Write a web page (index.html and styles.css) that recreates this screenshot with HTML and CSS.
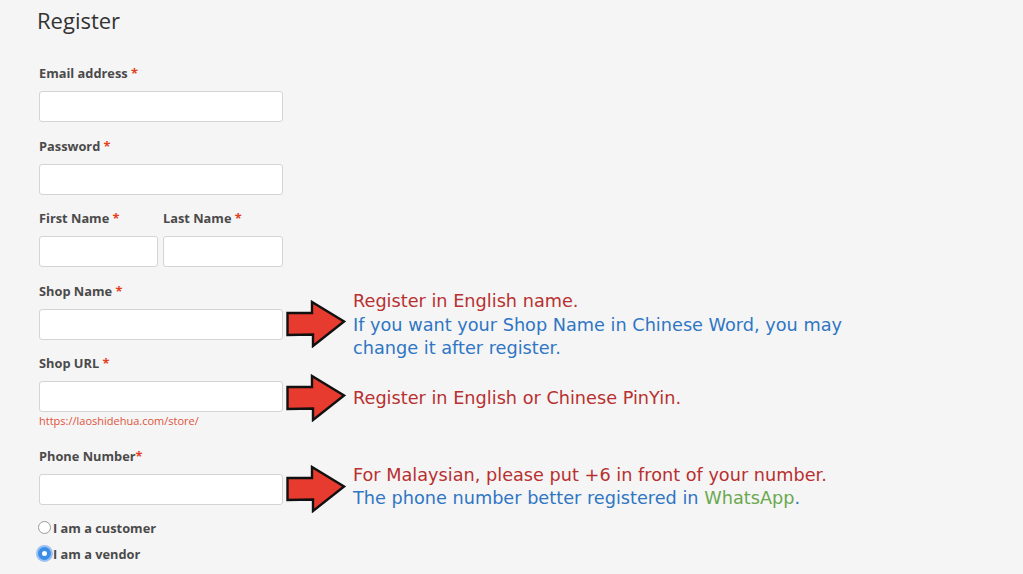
FILE: index.html
```html
<!DOCTYPE html>
<html lang="en">
<head>
<meta charset="utf-8">
<title>Register</title>
<link rel="stylesheet" href="styles.css">
</head>
<body>
<div class="page">
  <h2 class="title">Register</h2>
  <form class="form">
    <div class="field">
      <label class="label">Email address <span class="req">*</span></label>
      <div class="row"><input class="input" type="email"></div>
    </div>
    <div class="field">
      <label class="label">Password <span class="req">*</span></label>
      <div class="row"><input class="input" type="password"></div>
    </div>
    <div class="field">
      <div class="split">
        <div class="half">
          <label class="label">First Name <span class="req">*</span></label>
          <input class="input input-first" type="text">
        </div>
        <div class="half">
          <label class="label">Last Name <span class="req">*</span></label>
          <input class="input input-last" type="text">
        </div>
      </div>
    </div>
    <div class="field">
      <label class="label">Shop Name <span class="req">*</span></label>
      <div class="row">
        <input class="input" type="text">
        <svg class="arrow" viewBox="0 0 60 48" width="60" height="48"><polygon points="1.5,13 26,13 26,2 58,21.5 27,46 27,34.5 1.5,35" fill="#e63b2e" stroke="#111" stroke-width="2.4" stroke-linejoin="miter"/></svg>
        <p class="note note-mid"><span class="red">Register in English name.</span><br><span class="blue">If you want your Shop Name in Chinese Word, you may</span><br><span class="blue">change it after register.</span></p>
      </div>
    </div>
    <div class="field">
      <label class="label">Shop URL <span class="req">*</span></label>
      <div class="row">
        <input class="input" type="text">
        <svg class="arrow arrow-url" viewBox="0 0 60 48" width="60" height="48"><polygon points="1.5,13 26,13 26,2 58,21.5 27,46 27,34.5 1.5,35" fill="#e63b2e" stroke="#111" stroke-width="2.4" stroke-linejoin="miter"/></svg>
        <p class="note note-one"><span class="red">Register in English or Chinese PinYin.</span></p>
      </div>
      <div class="hint">https://laoshidehua.com/store/</div>
    </div>
    <div class="field field-phone">
      <label class="label">Phone Number<span class="req">*</span></label>
      <div class="row">
        <input class="input" type="tel">
        <svg class="arrow" viewBox="0 0 60 48" width="60" height="48"><polygon points="1.5,13 26,13 26,2 58,21.5 27,46 27,34.5 1.5,35" fill="#e63b2e" stroke="#111" stroke-width="2.4" stroke-linejoin="miter"/></svg>
        <p class="note note-low"><span class="red">For Malaysian, please put +6 in front of your number.</span><br><span class="blue">The phone number better registered in </span><span class="green">WhatsApp</span><span class="blue">.</span></p>
      </div>
    </div>
    <div class="roles">
      <label class="radio"><span class="dot"></span>I am a customer</label>
      <label class="radio"><span class="dot dot-on"></span>I am a vendor</label>
    </div>
  </form>
</div>
</body>
</html>
```

FILE: styles.css
```css
html, body {
  margin: 0;
  padding: 0;
  background: #f5f5f5;
}
.page {
  padding: 5px 0 0 39px;
  font-family: "Open Sans", "Liberation Sans", sans-serif;
  color: #444;
}
.title {
  margin: 0 0 0 -2px;
  font-size: 22px;
  line-height: 30px;
  font-weight: 400;
  color: #333;
}
.form {
  margin-top: 29px;
  display: flex;
  flex-direction: column;
}
.field {
  display: flex;
  flex-direction: column;
  margin-bottom: 14.5px;
}
.label {
  display: block;
  font-size: 12.8px;
  font-weight: 700;
  line-height: 18px;
  color: #4a4a4a;
  margin-bottom: 9px;
}
.req {
  color: #e2401c;
}
.row {
  display: flex;
  align-items: center;
  height: 31px;
}
.input {
  box-sizing: border-box;
  width: 244px;
  height: 31px;
  margin: 0;
  border: 1px solid #d4d4d4;
  border-radius: 3px;
  background: #fff;
  flex: none;
}
.split {
  display: flex;
  gap: 5px;
}
.half {
  display: flex;
  flex-direction: column;
}
.input-first {
  width: 119px;
}
.input-last {
  width: 120px;
}
.arrow {
  flex: none;
  margin-left: 3px;
  display: block;
}
.arrow-url {
  margin-top: 2px;
}
.note {
  margin: 0 0 0 7px;
  white-space: nowrap;
  font-family: "Comic Sans MS", "DejaVu Sans", sans-serif;
  font-size: 17.7px;
  line-height: 23.5px;
  flex: none;
}
.note-mid {
  margin-top: 3px;
}
.note-one {
  margin-top: 5px;
}
.note-low {
  margin-top: -4px;
}
.red { color: #b83030; }
.blue { color: #2f76c4; }
.green { color: #6aa84f; }
.hint {
  font-size: 11px;
  line-height: 18px;
  color: #e0533c;
  margin-bottom: 2px;
}
.field-phone {
  margin-bottom: 10px;
}
.roles {
  display: flex;
  flex-direction: column;
}
.radio {
  display: flex;
  align-items: center;
  height: 26px;
  font-size: 12.8px;
  font-weight: 700;
  color: #4a4a4a;
  margin-left: -1px;
}
.dot {
  box-sizing: border-box;
  width: 13px;
  height: 13px;
  border-radius: 50%;
  border: 1px solid #9a9a9a;
  background: #fff;
  margin-right: 2px;
  flex: none;
}
.dot-on {
  border: 4px solid #3b8ee8;
  background: #fff;
  box-shadow: 0 0 0 2px rgba(80, 150, 240, 0.55);
}
```
